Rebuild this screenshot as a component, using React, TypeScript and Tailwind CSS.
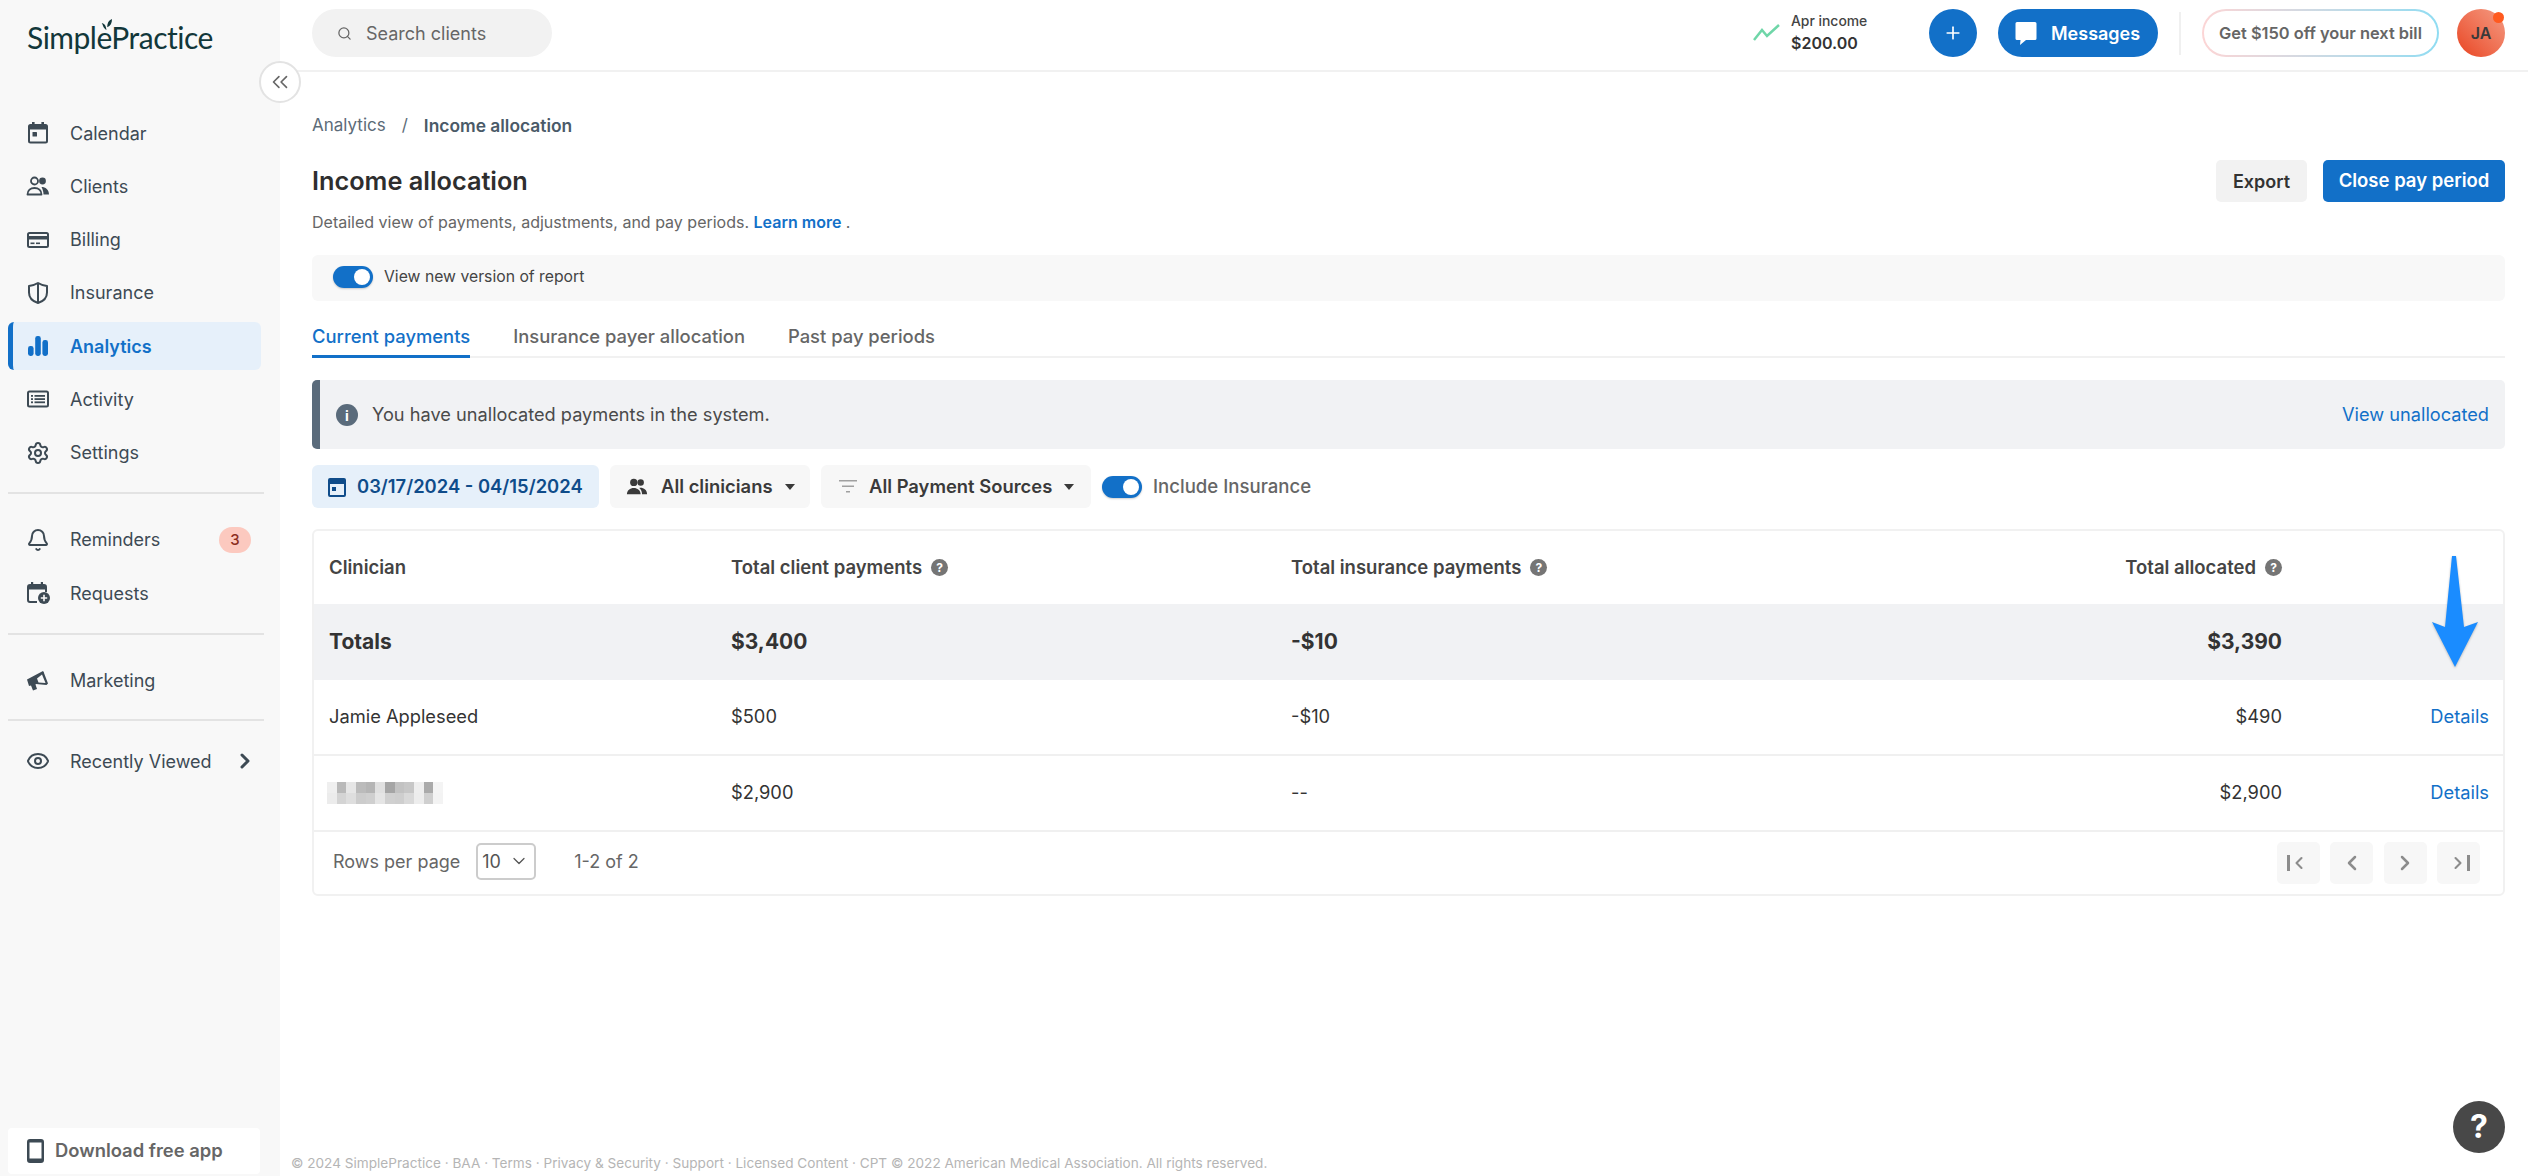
import React from "react";
import { Search, Plus, ChevronsLeft, ChevronRight, ChevronDown, ChevronLeft, Bell, Eye, Settings } from "lucide-react";

const I = ({ children, className = "" }: { children: React.ReactNode; className?: string }) => (
  <svg viewBox="0 0 24 24" className={className} fill="currentColor">{children}</svg>
);

const CalIcon = () => (
  <I className="w-[24px] h-[24px]">
    <path fillRule="evenodd" d="M6 1h2.6v2h6.8V1H18v2h1.5A2.5 2.5 0 0 1 22 5.500V20a2.500 2.500 0 0 1-2.500 2.500h-15A2.500 2.500 0 0 1 2 20V5.500A2.500 2.500 0 0 1 4.500 3H6zM4 8.500V20a.5.5 0 0 0 .5.500h15a.5.5 0 0 0 .5-.5V8.500z" />
    <rect x="6.500" y="11" width="4.500" height="4.500" rx=".6" />
  </I>
);
const ClientsIcon = () => (
  <I className="w-[24px] h-[24px]">
    <circle cx="8.500" cy="7" r="3.500" fill="none" stroke="currentColor" strokeWidth="1.800" />
    <path d="M1.500 20.500c0-4 3-6.500 7-6.500s7 2.500 7 6.500z" fill="none" stroke="currentColor" strokeWidth="1.800" strokeLinejoin="round" />
    <circle cx="16.500" cy="7" r="3.400" />
    <path d="M15.500 13c4 0 7.500 2.500 7.500 7.500h-5.500c0-3-1-5.500-2-7.500z" />
  </I>
);
const CardIcon = () => (
  <I className="w-[24px] h-[24px]">
    <path fillRule="evenodd" d="M3.500 4h17A2.500 2.500 0 0 1 23 6.500v11a2.500 2.500 0 0 1-2.500 2.500h-17A2.500 2.500 0 0 1 1 17.500v-11A2.500 2.500 0 0 1 3.500 4zM3 6.500V8h18V6.500a.5.5 0 0 0-.5-.5h-17a.5.500 0 0 0-.5.500zM3 11.500v6a.5.500 0 0 0 .5.500h17a.5.500 0 0 0 .5-.5v-6z" />
    <rect x="4.500" y="14.500" width="4" height="1.600" /><rect x="10" y="14.500" width="4" height="1.600" />
  </I>
);
const ShieldIcon = () => (
  <svg viewBox="0 0 24 24" className="w-[24px] h-[24px]" fill="none" stroke="currentColor" strokeWidth="2">
    <path d="M12 2c2.500 1.600 5.500 2.600 9 3v6.500c0 5-3.500 8.800-9 10.500-5.500-1.700-9-5.500-9-10.500V5c3.500-.4 6.500-1.400 9-3z" strokeLinejoin="round" />
    <path d="M12 2v20" />
  </svg>
);
const BarsIcon = () => (
  <I className="w-[24px] h-[24px]">
    <rect x="2" y="12" width="5.600" height="10" rx="2.400" />
    <rect x="9.200" y="2" width="5.600" height="20" rx="2.400" />
    <rect x="16.400" y="6" width="5.600" height="16" rx="2.400" />
  </I>
);
const ListIcon = () => (
  <I className="w-[24px] h-[24px]">
    <path fillRule="evenodd" d="M3.500 3.500h17A2.500 2.500 0 0 1 23 6v12a2.500 2.500 0 0 1-2.500 2.500h-17A2.500 2.500 0 0 1 1 18V6a2.500 2.500 0 0 1 2.500-2.500zm0 2a.5.500 0 0 0-.5.500v12a.5.500 0 0 0 .5.500h17a.5.500 0 0 0 .5-.5V6a.5.500 0 0 0-.5-.5z" />
    <rect x="5" y="8" width="2" height="1.800" /><rect x="8.500" y="8" width="10.500" height="1.800" />
    <rect x="5" y="11.200" width="2" height="1.800" /><rect x="8.500" y="11.200" width="10.500" height="1.800" />
    <rect x="5" y="14.400" width="2" height="1.800" /><rect x="8.500" y="14.400" width="10.500" height="1.800" />
  </I>
);
const RequestIcon = () => (
  <I className="w-[24px] h-[24px]">
    <path d="M5 1h2.200v2h7.600V1H17v2h1a3 3 0 0 1 3 3v5h-2V8.500H3V19a1 1 0 0 0 1 1h7v2H4a3 3 0 0 1-3-3V6a3 3 0 0 1 3-3h1z" />
    <circle cx="18" cy="17" r="6" />
    <path d="M17.200 13.800h1.600v2.400h2.400v1.600h-2.400v2.400h-1.600v-2.400h-2.400v-1.600h2.400z" fill="#f8f8f8" />
  </I>
);
const MegaIcon = () => (
  <I className="w-[24px] h-[24px]">
    <path d="M1 11.500 17 3l1 1.500V5l4 10.500-1.500 1.500L10 16l-.5.500 1.500 4.500-4 1.500-2-5L3 18z" />
    <path d="M16 6.500 11 10.500l1.500 4 7 .5z" fill="#f8f8f8" />
  </I>
);

const Nav = ({ icon, label, active, badge, chevron }: { icon: React.ReactNode; label: string; active?: boolean; badge?: string; chevron?: boolean }) => (
  <div className={`h-[48px] w-[253px] flex items-center rounded-[6px] pr-[10px] ${active ? "bg-[#e6f0fa] border-l-[5px] border-[#1270c8] pl-[13px] text-[#1270c8] font-semibold" : "pl-[18px] text-[#3d4a54]"}`}>
    <span className="w-[44px] shrink-0 flex">{icon}</span>
    <span className="text-[18px] flex-1 whitespace-nowrap">{label}</span>
    {badge && <span className="w-[32px] h-[26px] rounded-full bg-[#fcc9bf] text-[#8c2f1f] text-[15px] font-medium flex items-center justify-center">{badge}</span>}
    {chevron && <ChevronRight className="w-[24px] h-[24px] mr-[-6px]" strokeWidth={3} />}
  </div>
);
const Sep = () => <div className="h-[2px] w-[256px] bg-[#e3e3e3]" />;

const Toggle = () => (
  <span className="w-[40px] h-[22px] rounded-full bg-[#1270c8] flex items-center justify-end pr-[3px] shrink-0 shadow-[0_1px_2px_rgba(0,0,0,0.2)]">
    <span className="w-[16px] h-[16px] rounded-full bg-white" />
  </span>
);
const Help = () => (
  <span className="w-[17px] h-[17px] rounded-full bg-[#757575] text-white text-[12px] font-bold flex items-center justify-center shrink-0">?</span>
);
const Caret = () => <span className="w-0 h-0 border-x-[5px] border-x-transparent border-t-[6px] border-t-[#3a3a3a]" />;

const cols = "grid grid-cols-[402px_560px_1fr_207px] items-center pl-[15px] pr-[14px]";
const PageBtn = ({ children }: { children: React.ReactNode }) => (
  <span className="w-[43px] h-[42px] rounded-[5px] bg-[#f7f7f7] text-[#8c8c8c] flex items-center justify-center">{children}</span>
);
const Row = ({ name, a, b, c }: { name: React.ReactNode; a: string; b: string; c: string }) => (
  <div className={`${cols} h-[76px] shrink-0 border-b-2 border-[#f0f0f0] text-[18.300px] text-[#333]`}>
    <div>{name}</div><div>{a}</div><div className="flex justify-between"><span>{b}</span><span>{c}</span></div>
    <div className="text-right text-[#1270c8]">Details</div>
  </div>
);

const mosaic = ["#efefef","#b9b9b9","#e6e6e6","#bbb","#b5b5b5","#e0e0e0","#a5a5a5","#c2c2c2","#c7c7c7","#eee","#aaa","#f4f4f4"];
const mosaic2 = ["#ececec","#d4d4d4","#dedede","#ccc","#cfcfcf","#e5e5e5","#d0d0d0","#cecece","#d9d9d9","#ededed","#cfcfcf","#f3f3f3"];
const Blur = () => (
  <div className="w-[116px] h-[22px] flex flex-col -ml-[2px]">
    {[mosaic, mosaic2].map((m, i) => (
      <div key={i} className="flex h-[11px]">{m.map((c, j) => <span key={j} className="flex-1" style={{ background: c }} />)}</div>
    ))}
  </div>
);

export default function App() {
  return (
    <div className="relative flex w-[2528px] h-[1176px] overflow-hidden bg-white font-[Inter,sans-serif] text-[#333]">
      <aside className="w-[280px] shrink-0 bg-[#f8f8f8] flex flex-col pl-[8px]">
        <div className="h-[109px] pl-[19px] pt-[19px] relative">
          <span className="font-[Lato] text-[30px] leading-[36px] tracking-[-0.5px] text-[#12373a] block">SimplePractice</span>
          <svg viewBox="0 0 16 16" className="absolute left-[93px] top-[19px] w-[11px] h-[11px]" fill="#12373a"><path d="M8 16C3 13 3 8 1 6c4 0 6 3 7 10zM9 12c0-6 2-10 7-12 0 6-2 10-7 12z" /></svg>
        </div>
        <div className="flex flex-col gap-[5.300px]">
          <Nav icon={<CalIcon />} label="Calendar" />
          <Nav icon={<ClientsIcon />} label="Clients" />
          <Nav icon={<CardIcon />} label="Billing" />
          <Nav icon={<ShieldIcon />} label="Insurance" />
          <Nav icon={<BarsIcon />} label="Analytics" active />
          <Nav icon={<ListIcon />} label="Activity" />
          <Nav icon={<Settings className="w-[24px] h-[24px]" strokeWidth={2} />} label="Settings" />
        </div>
        <div className="mt-[15px]"><Sep /></div>
        <div className="mt-[22px] flex flex-col gap-[5.300px]">
          <Nav icon={<Bell className="w-[24px] h-[24px]" strokeWidth={2} />} label="Reminders" badge="3" />
          <Nav icon={<RequestIcon />} label="Requests" />
        </div>
        <div className="mt-[16px]"><Sep /></div>
        <div className="mt-[21px]"><Nav icon={<MegaIcon />} label="Marketing" /></div>
        <div className="mt-[15px]"><Sep /></div>
        <div className="mt-[16px]"><Nav icon={<Eye className="w-[24px] h-[24px]" strokeWidth={2} />} label="Recently Viewed" chevron /></div>
        <div className="mt-auto mb-[2px] w-[252px] h-[46px] bg-white rounded-[4px] flex items-center pl-[19px] gap-[11px]">
          <svg viewBox="0 0 17 24" className="w-[17px] h-[24px]"><path fillRule="evenodd" fill="#3d4a54" d="M3 0h11a3 3 0 0 1 3 3v18a3 3 0 0 1-3 3H3a3 3 0 0 1-3-3V3a3 3 0 0 1 3-3zm-.5 3.500v16h12v-16z" /></svg>
          <span className="text-[#666] text-[18.400px] font-semibold whitespace-nowrap">Download free app</span>
        </div>
      </aside>

      <div className="flex-1 min-w-0 flex flex-col">
        <header className="h-[72px] shrink-0 border-b-2 border-[#f1f1f1] flex items-start pt-[9px] pl-[32px] pr-[23px]">
          <div className="w-[240px] h-[48px] rounded-full bg-[#f2f2f2] flex items-center pl-[25px] gap-[14px] text-[#666]">
            <Search className="w-[15px] h-[15px]" strokeWidth={2} />
            <span className="text-[18px]">Search clients</span>
          </div>
          <div className="ml-auto flex items-center h-[48px]">
            <svg viewBox="0 0 27 18" className="w-[27px] h-[18px] mr-[11px]" fill="none" stroke="#6fd6a8" strokeWidth="2.500"><path d="M1 16 9 6l5 6L26 1" /></svg>
            <div className="w-[138px] flex flex-col">
              <span className="text-[13.900px] leading-[20px] font-medium text-[#444]">Apr income</span>
              <span className="text-[16px] leading-[24px] font-semibold text-[#333]">$200.00</span>
            </div>
            <span className="w-[48px] h-[48px] rounded-full bg-[#1270c8] text-white flex items-center justify-center"><Plus className="w-[20px] h-[20px]" strokeWidth={2} /></span>
            <span className="ml-[21px] w-[160px] h-[48px] rounded-full bg-[#1270c8] text-white flex items-center pl-[17px] gap-[14px] font-semibold text-[18px]">
              <svg viewBox="0 0 22 24" className="w-[22px] h-[24px]" fill="white"><path d="M2 1h18a1.500 1.500 0 0 1 1.500 1.500v15A1.500 1.500 0 0 1 20 19h-9l-6 5 .5-5H2A1.500 1.500 0 0 1 .5 17.500v-15A1.500 1.500 0 0 1 2 1z" /></svg>
              Messages
            </span>
            <span className="mx-[21px] w-[2px] h-[43px] bg-[#f0f0f0]" />
            <span className="w-[237px] h-[48px] rounded-full p-[2px] bg-gradient-to-r from-[#fcd5d5] to-[#8fdcf2]">
              <span className="w-full h-full rounded-full bg-white flex items-center justify-center text-[#666] text-[16.400px] font-semibold whitespace-nowrap">Get $150 off your next bill</span>
            </span>
            <span className="relative ml-[18px] w-[48px] h-[48px] rounded-full bg-gradient-to-bl from-[#f39a82] to-[#e8401a] flex items-center justify-center text-[#3a3a3a] font-semibold text-[16px]">
              JA
              <span className="absolute right-[1px] top-[3px] w-[11px] h-[11px] rounded-full bg-[#ff5a1f]" />
            </span>
          </div>
        </header>

        <main className="flex-1 min-h-0 pl-[32px] pr-[23px] flex flex-col">
          <div className="mt-[42px] h-[24px] flex items-center text-[17px] text-[#5c6b78]">
            <span>Analytics</span><span className="mx-[16px]">/</span><span className="font-semibold text-[17.400px] text-[#4a5a68]">Income allocation</span>
          </div>
          <div className="mt-[22px] flex items-start justify-between">
            <div>
              <h1 className="text-[25.300px] leading-[42px] font-semibold text-[#2e2e2e]">Income allocation</h1>
              <p className="mt-[8px] text-[16px] leading-[24px] text-[#666]">Detailed view of payments, adjustments, and pay periods. <span className="font-semibold text-[#1270c8]">Learn more</span> .</p>
            </div>
            <div className="flex gap-[16px]">
              <span className="w-[91px] h-[42px] rounded-[5px] bg-[#f2f2f2] flex items-center justify-center font-semibold text-[18px] text-[#333]">Export</span>
              <span className="w-[182px] h-[42px] rounded-[5px] bg-[#1270c8] flex items-center justify-center font-semibold text-[18.500px] text-white whitespace-nowrap">Close pay period</span>
            </div>
          </div>
          <div className="mt-[21px] h-[46px] rounded-[6px] bg-[#f8f8f8] flex items-center pl-[21px] gap-[11px] pb-[2px]">
            <Toggle /><span className="text-[15.750px] text-[#444]">View new version of report</span>
          </div>
          <div className="mt-[14px] h-[43px] flex items-start border-b-2 border-[#f1f1f1] text-[18.400px] gap-[43px] text-[#666] font-medium">
            <span className="h-[43px] pt-[8px] border-b-[3px] border-[#1270c8] text-[#1270c8]">Current payments</span>
            <span className="pt-[8px]">Insurance payer allocation</span>
            <span className="pt-[8px]">Past pay periods</span>
          </div>
          <div className="mt-[22px] h-[69px] rounded-[5px] bg-[#f1f2f4] border-l-[8px] border-[#5a6b7b] flex items-center pl-[16px] pr-[16px] pt-[1px] text-[18.200px] text-[#4a4a4a]">
            <span className="w-[22px] h-[22px] rounded-full bg-[#5a6b7b] text-white text-[14px] font-bold flex items-center justify-center mr-[14px]">i</span>
            <span>You have unallocated payments in the system.</span>
            <span className="ml-auto text-[#1270c8]">View unallocated</span>
          </div>
          <div className="mt-[16px] h-[43px] flex items-center gap-[11px] text-[18.400px] font-semibold">
            <span className="w-[287px] h-full rounded-[6px] bg-[#e6f0fa] text-[#0f4c8a] flex items-center pl-[16px] gap-[11px] whitespace-nowrap">
              <svg viewBox="0 0 18 20" className="w-[18px] h-[20px]" fill="#0f4c8a"><path fillRule="evenodd" d="M2 1h14a2 2 0 0 1 2 2v15a2 2 0 0 1-2 2H2a2 2 0 0 1-2-2V3a2 2 0 0 1 2-2zm0 6v11h14V7z" /><rect x="4" y="10" width="4" height="4" /></svg>
              03/17/2024 - 04/15/2024
            </span>
            <span className="w-[200px] h-full rounded-[6px] bg-[#f7f7f7] text-[#3a3a3a] flex items-center pl-[16px] gap-[13px] whitespace-nowrap">
              <svg viewBox="0 0 24 24" className="w-[22px] h-[22px]" fill="#3a3a3a"><circle cx="8.500" cy="7" r="4" /><circle cx="16" cy="7" r="3.500" /><path d="M1 20c0-4.500 3.500-7 7.500-7s7.500 2.500 7.500 7zM17.500 20c0-3-1-5.500-3-7 4.500-.5 8.500 2 8.500 7z" /></svg>
              All clinicians
              <Caret />
            </span>
            <span className="w-[270px] h-full rounded-[6px] bg-[#f7f7f7] text-[#3a3a3a] flex items-center pl-[18px] gap-[12px] whitespace-nowrap">
              <svg viewBox="0 0 18 14" className="w-[18px] h-[14px]" fill="#a0a0a0"><rect width="18" height="1.500" /><rect x="3" y="5.500" width="12" height="1.500" /><rect x="7" y="11" width="4" height="1.500" /></svg>
              All Payment Sources
              <Caret />
            </span>
            <Toggle />
            <span className="font-medium text-[18.600px] text-[#666] whitespace-nowrap">Include Insurance</span>
          </div>
          <div className="mt-[21px] h-[367px] border-2 border-[#f1f1f1] rounded-[6px] flex flex-col overflow-hidden">
            <div className={`${cols} h-[73px] shrink-0 font-semibold text-[18.500px] text-[#444]`}>
              <div>Clinician</div>
              <div className="flex items-center gap-[9px]">Total client payments <Help /></div>
              <div className="flex justify-between">
                <span className="flex items-center gap-[9px]">Total insurance payments <Help /></span>
                <span className="flex items-center gap-[9px]">Total allocated <Help /></span>
              </div>
              <div />
            </div>
            <div className={`${cols} h-[76px] shrink-0 bg-[#f1f2f4] font-bold text-[21px] text-[#333]`}>
              <div>Totals</div><div>$3,400</div>
              <div className="flex justify-between"><span>-$10</span><span>$3,390</span></div><div />
            </div>
            <Row name="Jamie Appleseed" a="$500" b="-$10" c="$490" />
            <Row name={<Blur />} a="$2,900" b="--" c="$2,900" />
            <div className="flex-1 flex items-center pl-[19px] pr-[23px] text-[18px] text-[#666]">
              <span className="mb-[4px]">Rows per page</span>
              <span className="ml-[16px] mb-[4px] w-[60px] h-[37px] rounded-[5px] border-2 border-[#ccc] flex items-center justify-between pl-[4px] pr-[5px] text-[#555]">10<ChevronDown className="w-[20px] h-[20px]" strokeWidth={1.500} /></span>
              <span className="ml-[38px] mb-[4px]">1-2 of 2</span>
              <div className="ml-auto flex gap-[10.500px]">
                <PageBtn><span className="w-[3px] h-[16px] bg-[#8c8c8c] mr-[1px]" /><ChevronLeft className="w-[20px] h-[20px] -ml-[2px]" strokeWidth={2.500} /></PageBtn>
                <PageBtn><ChevronLeft className="w-[24px] h-[24px]" strokeWidth={2.500} /></PageBtn>
                <PageBtn><ChevronRight className="w-[24px] h-[24px]" strokeWidth={2.500} /></PageBtn>
                <PageBtn><ChevronRight className="w-[20px] h-[20px] -mr-[2px]" strokeWidth={2.500} /><span className="w-[3px] h-[16px] bg-[#8c8c8c] ml-[1px]" /></PageBtn>
              </div>
            </div>
          </div>
          <div className="mt-auto mb-[4px] -ml-[21px] text-[13.600px] leading-[18px] text-[#b5b5b5] whitespace-nowrap">© 2024 SimplePractice · BAA · Terms · Privacy &amp; Security · Support · Licensed Content · CPT © 2022 American Medical Association. All rights reserved.</div>
        </main>
      </div>

      <button className="absolute left-[259px] top-[61px] w-[42px] h-[42px] rounded-full bg-white border-2 border-[#e3e3e3] flex items-center justify-center text-[#666]">
        <ChevronsLeft className="w-[26px] h-[26px]" strokeWidth={1.500} />
      </button>
      <svg viewBox="0 0 46 112" className="absolute left-[2432px] top-[556px] w-[46px] h-[112px]" style={{ filter: "drop-shadow(0 1px 1px rgba(0,0,0,0.25))" }}>
        <path fill="#1a8cff" d="M20 0h4L32 71l14-5-23 45L0 66l13 5z" />
      </svg>
      <span className="absolute left-[2453px] top-[1101px] w-[52px] h-[52px] rounded-full bg-[#484848] text-white text-[32px] font-bold flex items-center justify-center">?</span>
    </div>
  );
}
